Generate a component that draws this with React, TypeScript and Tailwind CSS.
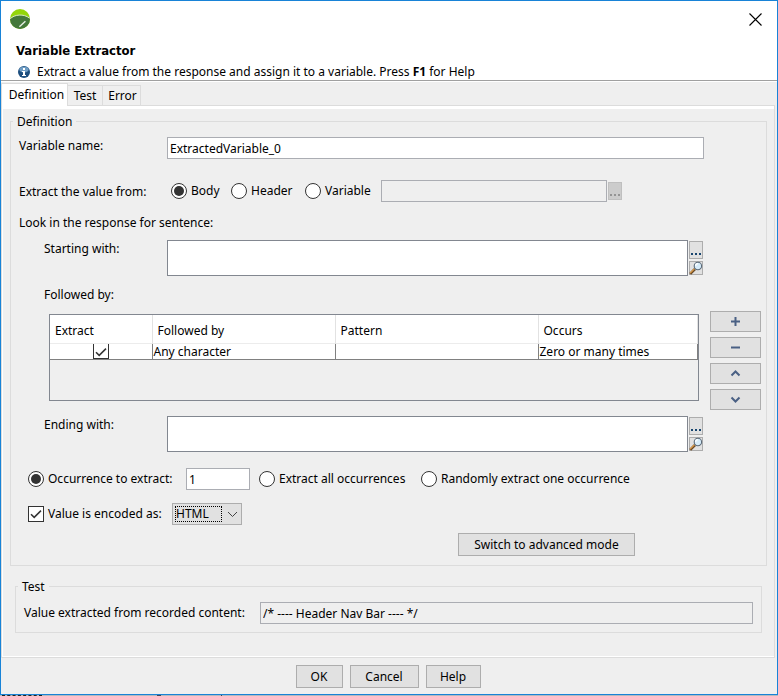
import React from 'react';

const radioClass =
  "grid size-4 shrink-0 appearance-none place-content-center rounded-full border border-[#333] bg-white before:size-2.5 before:rounded-full checked:before:bg-[#333]";
const groupClass = "min-w-0 border border-[#dcdcdc]";
const legendClass = "-ml-1.5 px-1 pt-px leading-[14px]";
const buttonClass = "h-[23px] border border-[#adadad] bg-[#e1e1e1] text-center leading-4";

function AppLogo() {
  return (
    <svg className="size-5" viewBox="0 0 20 20" aria-hidden="true">
      <circle cx="10" cy="10" r="10" fill="#94d60a" />
      <path d="M0 10C4 5.6 14 4.6 19.4 9L20 10A10 10 0 0 1 0 10Z" fill="#44783a" />
      <path d="M0.2 9.8C4.4 5.4 13.6 4.4 19.6 9.2" fill="none" stroke="#d5e8c8" strokeWidth="1" />
      <path d="M9.4 17.8L15.4 12.2" stroke="#e8f0e4" strokeWidth="1.4" />
    </svg>
  );
}

function InfoIcon() {
  return (
    <svg className="size-3 shrink-0" viewBox="0 0 12 12" aria-hidden="true">
      <circle cx="6" cy="6" r="6" fill="#1d4e7e" />
      <ellipse cx="6" cy="3.6" rx="4.6" ry="2.8" fill="#6f9dc4" />
      <path d="M5 2h2v2H5zM4 5h3v4h1v1H4V9h1V6H4z" fill="#fff" />
    </svg>
  );
}

function Magnifier() {
  return (
    <svg className="size-[14px]" viewBox="0 0 14 14" aria-hidden="true">
      <path d="M1.2 12.8L6 8" stroke="#6b4a26" strokeWidth="2.6" />
      <path d="M1 12.2L5.4 7.8" stroke="#e2a04c" strokeWidth="1.2" />
      <circle cx="8.9" cy="5" r="3.7" fill="#d6ecfa" stroke="#5b6a78" strokeWidth="1.1" />
      <path d="M6.6 5A2.4 2.4 0 0 1 9 2.6" fill="none" stroke="#fff" strokeWidth="1.2" />
    </svg>
  );
}

function Dots({ muted = false }: { muted?: boolean }) {
  return (
    <svg className="h-4 w-3" viewBox="0 0 12 16" fill={muted ? '#949494' : '#17456f'} aria-hidden="true">
      <path d="M1 11h2v2H1zM5 11h2v2H5zM9 11h2v2H9z" />
    </svg>
  );
}

function CheckMark() {
  return (
    <svg className="pointer-events-none absolute inset-0 size-4" viewBox="0 0 16 16" aria-hidden="true">
      <path d="M3 8.2L6.2 11.4L13 4.6" fill="none" stroke="#333" strokeWidth="1.5" />
    </svg>
  );
}

function SentenceField({ id, label }: { id: string; label: string }) {
  return (
    <div className="flex items-start pr-[58px] pl-[25px]">
      <label htmlFor={id} className="w-[123px] shrink-0 leading-[18px]">{label}</label>
      <textarea id={id} className="block h-9 min-w-0 flex-1 resize-none border border-[#828790] bg-white px-0.5" />
      <div className="ml-px flex flex-col gap-0.5 pt-px">
        <button type="button" aria-label="Browse" className="h-[18px] w-[14px] border border-[#adadad] bg-[#e1e1e1]">
          <Dots />
        </button>
        <button type="button" aria-label="Search" className="grid size-[14px] place-content-center border border-[#adadad] bg-[#e1e1e1]">
          <Magnifier />
        </button>
      </div>
    </div>
  );
}

const rowButtons = [
  { label: 'Add', path: 'M6.5 2v9M2 6.5h9' },
  { label: 'Remove', path: 'M2 6.5h9' },
  { label: 'Move up', path: 'M2.5 8.5l4-4l4 4' },
  { label: 'Move down', path: 'M2.5 4.5l4 4l4-4' },
];

function PatternTable() {
  return (
    <div className="mt-[3px] h-[87px] min-w-0 flex-1 border border-[#828790]">
      <table className="w-full table-fixed border-collapse bg-white text-left">
        <colgroup>
          <col className="w-[102px]" />
          <col className="w-[183px]" />
          <col className="w-[203px]" />
          <col />
        </colgroup>
        <thead>
          <tr className="h-[28px] border-b border-[#ececec]">
            <th className="border-r border-[#e2e2e2] pt-1 pl-[5px] font-normal">Extract</th>
            <th className="border-r border-[#e2e2e2] pt-1 pl-[5px] font-normal">Followed by</th>
            <th className="border-r border-[#e2e2e2] pt-1 pl-[5px] font-normal">Pattern</th>
            <th className="border-r border-[#e2e2e2] pt-1 pl-[5px] font-normal">Occurs</th>
          </tr>
        </thead>
        <tbody>
          <tr className="h-4 border-b border-[#808080] leading-[15px]">
            <td className="border-r border-[#808080]">
              <span className="relative mx-auto block h-[15px] w-4">
                <input type="checkbox" defaultChecked aria-label="Extract" className="block h-[15px] w-4 appearance-none border border-t-0 border-[#333] bg-white" />
                <CheckMark />
              </span>
            </td>
            <td className="border-r border-[#808080] pl-px">Any character</td>
            <td className="border-r border-[#808080]"></td>
            <td className="border-r border-[#808080] pl-px">Zero or many times</td>
          </tr>
        </tbody>
      </table>
    </div>
  );
}

function DefinitionGroup() {
  return (
    <fieldset className={`${groupClass} pr-[5px] pb-[9px] pl-2`}>
      <legend className={legendClass}>Definition</legend>

      <div className="flex items-start pt-2 pr-[57px]">
        <label htmlFor="variable-name" className="w-[148px] shrink-0 leading-[18px]">Variable name:</label>
        <input id="variable-name" defaultValue="ExtractedVariable_0" className="h-[22px] min-w-0 flex-1 border border-[#abadb3] bg-white px-0.5" />
      </div>

      <div className="mt-[21px] flex h-[22px] items-center" role="radiogroup" aria-labelledby="source-label">
        <span id="source-label" className="w-[152px] shrink-0 pt-0.5">Extract the value from:</span>
        <label className="flex w-[60px] items-center gap-1">
          <input type="radio" name="source" defaultChecked className={radioClass} />
          Body
        </label>
        <label className="flex w-[74px] items-center gap-1">
          <input type="radio" name="source" className={radioClass} />
          Header
        </label>
        <label className="flex w-[76px] items-center gap-1">
          <input type="radio" name="source" className={radioClass} />
          Variable
        </label>
        <input disabled aria-label="Source variable" className="h-[22px] w-[226px] border border-[#abadb3] bg-[#efefef]" />
        <button type="button" disabled aria-label="Browse variables" className="ml-px h-[18px] w-[14px] border border-[#bfbfbf] bg-[#cccccc]">
          <Dots muted />
        </button>
      </div>

      <p className="mt-3 mb-2 leading-[18px]">Look in the response for sentence:</p>
      <SentenceField id="starting-with" label="Starting with:" />

      <p className="mt-[10px] pl-[25px] leading-[18px]">Followed by:</p>
      <div className="mt-[7px] mb-1.5 flex items-start gap-[11px] pl-[30px]">
        <PatternTable />
        <div className="flex w-[51px] flex-col gap-[5px]">
          {rowButtons.map((button) => (
            <button key={button.label} type="button" aria-label={button.label} className="grid h-[21px] place-content-center border border-[#adadad] bg-[#e1e1e1]">
              <svg className="size-[13px]" viewBox="0 0 13 13" fill="none" stroke="#4a6084" strokeWidth="2" aria-hidden="true">
                <path d={button.path} />
              </svg>
            </button>
          ))}
        </div>
      </div>
      <SentenceField id="ending-with" label="Ending with:" />

      <div className="mt-4 flex h-[22px] items-center pl-[9px]">
        <label className="flex w-[158px] items-center gap-1">
          <input type="radio" name="occurrence" defaultChecked className={radioClass} />
          Occurrence to extract:
        </label>
        <input aria-label="Occurrence number" defaultValue="1" className="h-[22px] w-16 border border-[#abadb3] bg-white px-0.5" />
        <label className="ml-[9px] flex w-[162px] items-center gap-1">
          <input type="radio" name="occurrence" className={radioClass} />
          Extract all occurrences
        </label>
        <label className="flex items-center gap-1">
          <input type="radio" name="occurrence" className={radioClass} />
          Randomly extract one occurrence
        </label>
      </div>

      <div className="mt-[13px] flex h-[22px] items-center pl-[9px]">
        <label className="flex w-36 items-center gap-1">
          <span className="relative size-4 shrink-0">
            <input type="checkbox" defaultChecked className="block size-4 appearance-none border border-[#333] bg-white" />
            <CheckMark />
          </span>
          Value is encoded as:
        </label>
        <div className="flex h-[22px] w-[70px] items-center gap-[5px] border border-[#adadad] bg-[#e1e1e1] pl-0.5">
          <select aria-label="Encoding" className="h-4 w-[47px] appearance-none border border-dotted border-black leading-[14px]">
            <option>HTML</option>
            <option>URL</option>
          </select>
          <svg className="h-3 w-[11px]" viewBox="0 0 11 12" fill="none" stroke="#444" aria-hidden="true">
            <path d="M1 4l4.5 4.5L10 4" />
          </svg>
        </div>
      </div>

      <div className="mt-2 flex justify-end pr-[126px]">
        <button type="button" className={`${buttonClass} w-[177px]`}>Switch to advanced mode</button>
      </div>
    </fieldset>
  );
}

export default function App() {
  return (
    <div className="font-['Noto_Sans','DejaVu_Sans_Condensed',sans-serif] text-[12px] leading-4 text-black">
      <div className="border border-[#1883d7] bg-[#efefef]">
        <header className="border-b border-[#a0a0a0] bg-white">
          <div className="flex items-start justify-between pt-2 pr-[15px] pl-[9px]">
            <AppLogo />
            <button type="button" aria-label="Close" className="mt-1">
              <svg className="size-[13px]" viewBox="0 0 13 13" stroke="#000" strokeWidth="1.1" aria-hidden="true">
                <path d="M0.5 0.5l12 12M12.5 0.5l-12 12" />
              </svg>
            </button>
          </div>
          <h1 className="mt-3 pl-[15px] font-['DejaVu_Sans_Condensed','DejaVu_Sans',sans-serif] text-[13px] leading-5 font-bold">Variable Extractor</h1>
          <p className="mt-[3px] flex items-center gap-[7px] pl-[17px]">
            <InfoIcon />
            <span>Extract a value from the response and assign it to a variable. Press <b>F1</b> for Help</span>
          </p>
        </header>

        <div className="flex h-[25px] items-end border-t border-white" role="tablist">
          <button type="button" role="tab" aria-selected="true" className="h-[23px] w-[67px] border border-b-0 border-[#dcdcdc] bg-white pl-1">Definition</button>
          <button type="button" role="tab" aria-selected="false" className="h-[21px] w-[35px] border border-l-0 border-[#dcdcdc]">Test</button>
          <button type="button" role="tab" aria-selected="false" className="h-[21px] w-[38px] border border-l-0 border-[#dcdcdc] pl-0.5">Error</button>
          <div className="mr-0.5 flex-1 border-b border-[#dcdcdc]" />
        </div>

        <div className="mr-0.5 border border-t-0 border-[#dcdcdc]" role="tabpanel">
          <div className="border-y border-l border-white border-t-[3px] px-[7px] pt-[5px] pb-[23px]">
            <DefinitionGroup />
            <fieldset className={`${groupClass} mx-[5px] mt-[13px] px-2 pb-2`}>
              <legend className={legendClass}>Test</legend>
              <div className="flex items-center pt-2">
                <label htmlFor="test-value" className="w-[236px] shrink-0">Value extracted from recorded content:</label>
                <input id="test-value" readOnly value="/* ---- Header Nav Bar ---- */" className="h-[22px] min-w-0 flex-1 border border-[#abadb3] bg-[#efefef] px-0.5" />
              </div>
            </fieldset>
          </div>
        </div>

        <footer className="flex justify-center gap-[7px] pt-[7px] pr-0.5 pb-1.5">
          <button type="button" className={`${buttonClass} w-[47px]`}>OK</button>
          <button type="button" className={`${buttonClass} w-[69px]`}>Cancel</button>
          <button type="button" className={`${buttonClass} w-[55px]`}>Help</button>
        </footer>
      </div>
      {/* sliver of the window underneath */}
      <div className="flex h-px bg-[#b5b9bf]">
        <span className="ml-0.5 w-10 border-t border-dashed border-[#222]" />
        <span className="ml-[115px] w-1 bg-[#445]" />
        <span className="ml-[60px] w-px bg-[#445]" />
      </div>
    </div>
  );
}
